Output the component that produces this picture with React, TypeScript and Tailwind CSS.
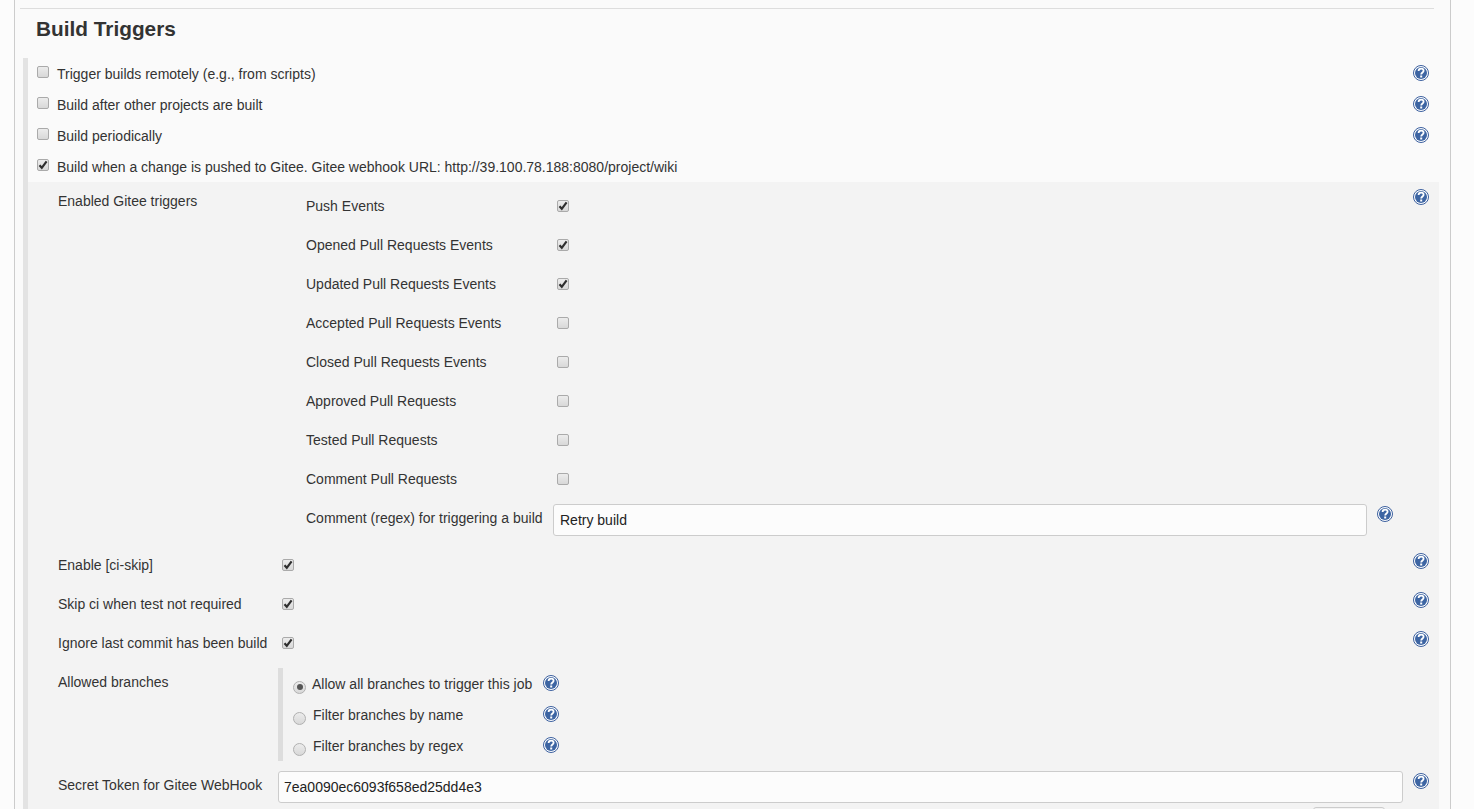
/**
 * Build Triggers section of a Jenkins job config page
 */
import React from 'react';

const HelpIcon: React.FC = () => (
  <svg width="16" height="16" viewBox="0 0 16 16" className="shrink-0 block">
    <circle cx="8" cy="8" r="7.5" fill="#ffffff" stroke="#3b5f9e" strokeWidth="1" />
    <circle cx="8" cy="8" r="6" fill="#3d65a3" />
    <path
      d="M5.6 6C5.6 4.5 6.7 3.6 8.1 3.6C9.5 3.6 10.6 4.5 10.6 5.8C10.6 7.4 8.2 7.6 8.2 9.5"
      fill="none"
      stroke="#ffffff"
      strokeWidth="1.8"
    />
    <rect x="7.2" y="10.5" width="2" height="2" fill="#ffffff" />
  </svg>
);

const CheckBox: React.FC<{ checked?: boolean }> = ({ checked }) => (
  <span className="block w-[12px] h-[12px] shrink-0 rounded-[2px] border border-[#aaaaaa] bg-gradient-to-b from-[#ececec] to-[#d8d8d8]">
    {checked && (
      <svg width="10" height="10" viewBox="0 0 10 10" className="block">
        <path d="M1.5 5.2L3.8 7.8L8.6 1.4" fill="none" stroke="#2e2e2e" strokeWidth="2.2" />
      </svg>
    )}
  </span>
);

const Radio: React.FC<{ checked?: boolean }> = ({ checked }) => (
  <span className="flex items-center justify-center w-[13px] h-[13px] shrink-0 rounded-full border border-[#b0b0b0] bg-gradient-to-b from-[#ececec] to-[#d8d8d8]">
    {checked && <span className="block w-[6px] h-[6px] rounded-full bg-[#555555]" />}
  </span>
);

const topTriggers = [
  { label: 'Trigger builds remotely (e.g., from scripts)', help: true },
  { label: 'Build after other projects are built', help: true },
  { label: 'Build periodically', help: true },
  {
    label: 'Build when a change is pushed to Gitee. Gitee webhook URL: http://39.100.78.188:8080/project/wiki',
    checked: true,
  },
];

const giteeEvents = [
  { label: 'Push Events', checked: true },
  { label: 'Opened Pull Requests Events', checked: true },
  { label: 'Updated Pull Requests Events', checked: true },
  { label: 'Accepted Pull Requests Events' },
  { label: 'Closed Pull Requests Events' },
  { label: 'Approved Pull Requests' },
  { label: 'Tested Pull Requests' },
  { label: 'Comment Pull Requests' },
];

const skipOptions = ['Enable [ci-skip]', 'Skip ci when test not required', 'Ignore last commit has been build'];

const branchOptions = [
  { label: 'Allow all branches to trigger this job', checked: true },
  { label: 'Filter branches by name' },
  { label: 'Filter branches by regex' },
];

export default function App() {
  return (
    <div className="h-[809px] w-[1474px] overflow-hidden bg-[#fcfcfc] font-['Liberation_Sans',Arial,sans-serif] text-[14px] text-[#333333]">
      <div className="ml-[14px] w-[1437px] h-full border-x border-[#cccccc] bg-[#fafafa]">
        {/* 見出し */}
        <div className="ml-[5px] mr-[16px] pt-[8px]">
          <div className="border-t border-[#dddddd] pl-[16px] h-[50px] pt-[6px]">
            <h3 className="text-[20.8px] leading-[28px] font-bold text-[#333333]">Build Triggers</h3>
          </div>
        </div>

        <div className="ml-[8px] mr-[11px] border-l-[5px] border-[#e3e3e3] h-full">
          {topTriggers.map((row) => (
            <div key={row.label} className="flex items-center h-[31px] pl-[9px] pr-[10px]">
              <span className="-mt-[3px]">
                <CheckBox checked={row.checked} />
              </span>
              <span className="ml-[8px] flex-1 pt-[1px]">{row.label}</span>
              {row.help && (
                <span className="-mt-[2px]">
                  <HelpIcon />
                </span>
              )}
            </div>
          ))}

          {/* Gitee トリガー設定 */}
          <div className="bg-[#f3f3f3] pt-[5px] h-full">
            <div className="flex">
              <div className="w-[278px] shrink-0 pl-[30px] pt-[4px] leading-[20px]">Enabled Gitee triggers</div>
              <div className="flex-1">
                {giteeEvents.map((row) => (
                  <div key={row.label} className="flex items-center h-[39px]">
                    <span className="w-[251px] shrink-0">{row.label}</span>
                    <span className="-mt-[1px]">
                      <CheckBox checked={row.checked} />
                    </span>
                  </div>
                ))}
                <div className="flex h-[47px] pt-[5px]">
                  <span className="w-[247px] shrink-0 pt-[4px] leading-[20px]">Comment (regex) for triggering a build</span>
                  <input
                    readOnly
                    defaultValue="Retry build"
                    className="w-[814px] h-[32px] rounded-[3px] border border-[#cccccc] bg-[#fcfcfc] px-[6px] text-[#222222] outline-none"
                  />
                  <span className="ml-[10px] mt-[2px]">
                    <HelpIcon />
                  </span>
                </div>
              </div>
              <div className="w-[26px] shrink-0 pt-[2px]">
                <HelpIcon />
              </div>
            </div>

            {skipOptions.map((label) => (
              <div key={label} className="flex items-center h-[39px] pl-[30px] pr-[10px]">
                <span className="w-[224px] shrink-0">{label}</span>
                <span className="-mt-[1px]">
                  <CheckBox checked />
                </span>
                <span className="ml-auto -mt-[10px]">
                  <HelpIcon />
                </span>
              </div>
            ))}

            <div className="flex mt-[5px] pl-[30px]">
              <div className="w-[220px] pt-[4px] leading-[20px]">Allowed branches</div>
              <div className="border-l-[5px] border-[#dddddd] pl-[10px]">
                {branchOptions.map((row) => (
                  <div key={row.label} className="flex items-center h-[31px]">
                    <span className="mt-[7px]">
                      <Radio checked={row.checked} />
                    </span>
                    <span className={`${row.checked ? 'ml-[6px] w-[231px]' : 'ml-[7px] w-[230px]'} pt-[1px]`}>{row.label}</span>
                    <span className="-mt-[2px]">
                      <HelpIcon />
                    </span>
                  </div>
                ))}
              </div>
            </div>

            <div className="flex mt-[10px] pl-[30px] pr-[10px]">
              <div className="w-[220px] pt-[4px] leading-[20px]">Secret Token for Gitee WebHook</div>
              <input
                readOnly
                defaultValue="7ea0090ec6093f658ed25dd4e3"
                className="w-[1125px] h-[32px] rounded-[3px] border border-[#cccccc] bg-[#fcfcfc] px-[5px] text-[#222222] outline-none"
              />
              <span className="ml-auto mt-[2px]">
                <HelpIcon />
              </span>
            </div>

            <div className="mt-[4px] ml-[1285px] w-[72px] h-[24px] rounded-t-[3px] border border-[#cccccc]" />
          </div>
        </div>
      </div>
    </div>
  );
}
